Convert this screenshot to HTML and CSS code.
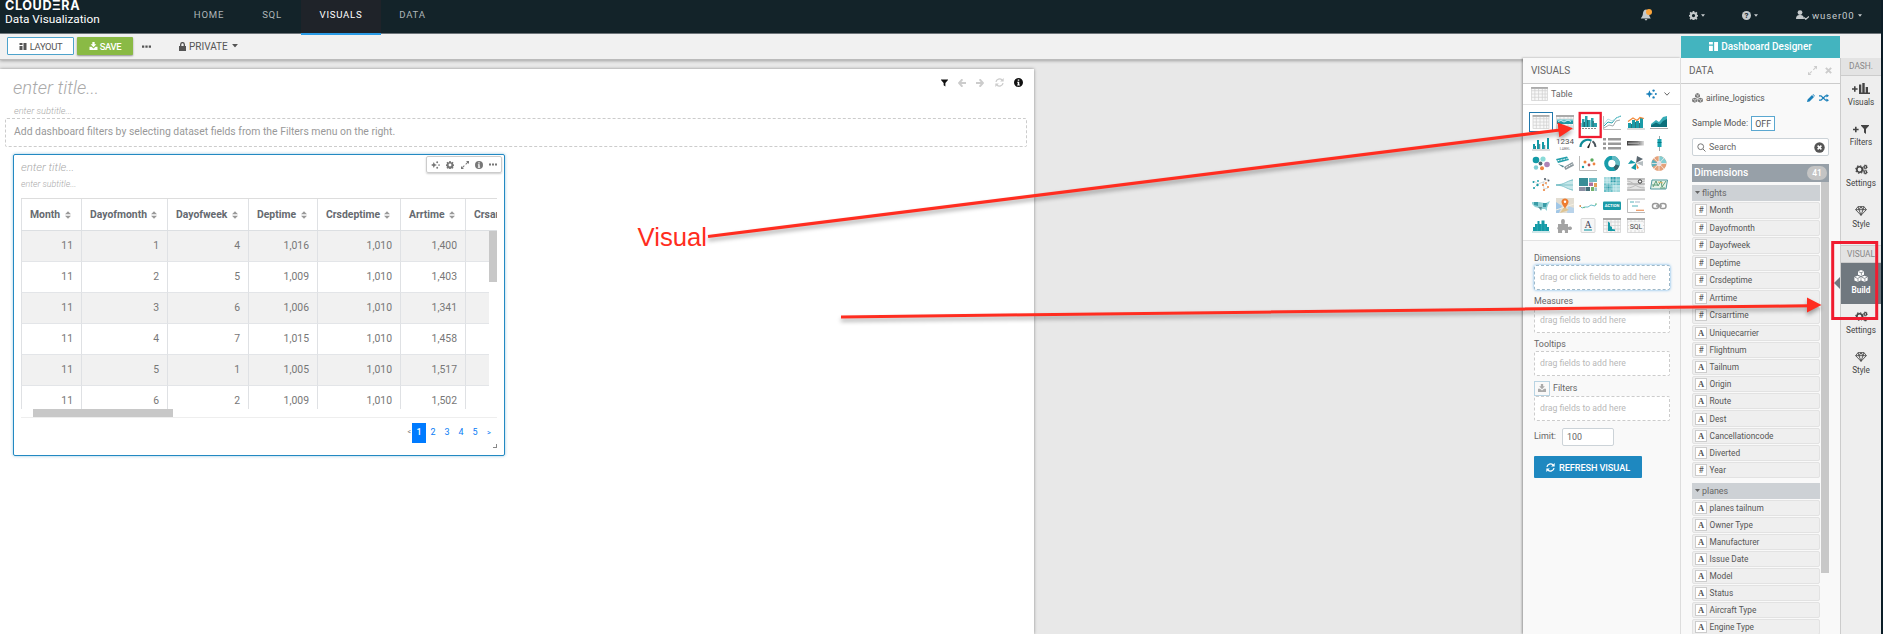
FILE: index.html
```html
<!DOCTYPE html>
<html lang="en">
<head>
<meta charset="utf-8">
<title>Cloudera Data Visualization</title>
<link rel="stylesheet" href="styles.css">
</head>
<body>
<svg class="defs" width="0" height="0">
  <symbol id="gear" viewBox="0 0 16 16"><path fill-rule="evenodd" d="M6.600 0h2.800l.4 2.200 1.500.6L13.100 1.500l1.900 1.900-1.200 1.900.6 1.400 2.200.5v2.600l-2.200.5-.6 1.400 1.200 1.900-1.900 1.900-1.900-1.200-1.400.6-.5 2.100H6.600l-.5-2.100-1.400-.6-1.900 1.200L1 13.600l1.200-1.900-.6-1.400L0 9.800V7.200l1.600-.5.6-1.400L1 3.400l1.900-1.900 1.800 1.300 1.500-.6zM8 5.200a2.900 2.900 0 1 0 0 5.800 2.900 2.900 0 0 0 0-5.800z"/></symbol>
  <symbol id="gears" viewBox="0 0 20 16"><circle cx="7" cy="8" r="4.200" fill="none" stroke="currentColor" stroke-width="2.600"/><circle cx="7" cy="8" r="5.900" fill="none" stroke="currentColor" stroke-width="1.600" stroke-dasharray="2.300 2.300"/><circle cx="16" cy="4" r="2" fill="none" stroke="currentColor" stroke-width="1.700"/><circle cx="16" cy="12" r="2" fill="none" stroke="currentColor" stroke-width="1.700"/><circle cx="16" cy="4" r="3.200" fill="none" stroke="currentColor" stroke-dasharray="1.500 1.500"/><circle cx="16" cy="12" r="3.200" fill="none" stroke="currentColor" stroke-dasharray="1.500 1.500"/></symbol>
  <symbol id="caret" viewBox="0 0 10 6"><path d="M0 0h10L5 6z"/></symbol>
  <symbol id="sort" viewBox="0 0 8 10"><path d="M0 4h8L4 0zM0 6h8l-4 4z"/></symbol>
  <symbol id="funnel" viewBox="0 0 12 12"><path d="M0 0h12v1L7.500 6v6l-3-2.200V6L0 1z"/></symbol>
  <symbol id="arrow" viewBox="0 0 12 12"><path d="M7 0 5 0-.2 6 5 12h2V9.500L4.800 7.400H12V4.600H4.800L7 2.500z"/></symbol>
  <symbol id="refresh" viewBox="0 0 14 14"><path d="M1.500 6A5.600 5.600 0 0 1 11 3M12.500 8A5.600 5.600 0 0 1 3 11" fill="none" stroke="currentColor" stroke-width="2"/><path d="M13.500 0v5.500H8zM.5 14V8.500H6z"/></symbol>
  <symbol id="info" viewBox="0 0 12 12"><path fill-rule="evenodd" d="M6 0a6 6 0 1 1 0 12A6 6 0 0 1 6 0zM5 2v1.800h2V2zM4.300 5v1.200H5v2.600h-.7V10h3.400V8.800H7V5z"/></symbol>
  <symbol id="expand" viewBox="0 0 12 12"><path d="M7.500 0H12v4.500zM0 7.500V12h4.500zM9.500 1.500l1 1-3 3-1-1zM4.500 6.500l1 1-3 3-1-1z"/></symbol>
  <symbol id="dots" viewBox="0 0 12 4"><path d="M0 .5h3v3H0zM4.500.5h3v3h-3zM9 .5h3v3H9z"/></symbol>
  <symbol id="spark" viewBox="0 0 16 14"><path d="M5 1.500 6.600 5.400 10.500 7 6.600 8.600 5 12.500 3.400 8.600-.5 7l3.900-1.600z"/><circle cx="11" cy="2" r="1.700"/><circle cx="14.300" cy="7" r="1.500"/><circle cx="11" cy="12" r="1.700"/></symbol>
  <symbol id="download" viewBox="0 0 14 14"><path d="M5 0h4v4h3L7 9 2 4h3zM0 8.500h3.500L7 11.500l3.500-3H14V14H0z"/></symbol>
  <symbol id="layout" viewBox="0 0 14 14"><path d="M0 0h6v4H0zM0 6h6v8H0zM8 0h6v14H8z"/></symbol>
  <symbol id="cubes" viewBox="0 0 18 16"><path d="M9 0l4 1.700v4.600L9 8 5 6.300V1.700zM4.400 7.500l4.200 1.700v4.700l-4.200 1.900L.2 13.900V9.200zM13.600 7.500l4.200 1.700v4.700l-4.200 1.900-4.200-1.900V9.200z"/><path d="M5.500 2.200 9 3.700l3.500-1.500M9.500 7V4M.9 9.700l3.500 1.500 3.500-1.500M5 15v-3.500M10.100 9.700l3.500 1.500 3.500-1.500M14.200 15v-3.500" class="cube-lines"/></symbol>
  <symbol id="gem" viewBox="0 0 18 15"><path d="M4.500 1h9L17 5.500 9 14 1 5.500zM1 5.500h16M6 5.500 9 14l3-8.500L9 1 6 5.500 4.500 1M12 5.500 13.500 1" fill="none" stroke="currentColor" stroke-width="1.300"/></symbol>
</svg>

<div class="app">
  <header class="nav">
    <div class="brand"><b>CLOUDΞRA</b><span>Data Visualization</span></div>
    <nav class="tabs"><a class="t1">HOME</a><a class="t2">SQL</a><a class="t3 active">VISUALS</a><a class="t4">DATA</a></nav>
    <div class="tools">
      <svg class="bell" viewBox="0 0 12 12"><path d="M6 .5C3.500.8 3 3 2.800 5.500 2.500 7.500 1.500 8 .8 9.500h10C10 8 9.400 7.500 9.200 5.500 9 3 8.500.8 6 .5zM4.500 10h3L6 11.800z" fill="#c5cacc"/><circle cx="9" cy="3" r="3" fill="#fca53c"/></svg>
      <div class="tool tg"><svg width="9" height="9"><use href="#gear"/></svg><svg width="4" height="3"><use href="#caret"/></svg></div>
      <div class="tool th"><span class="help">?</span><svg width="4" height="3"><use href="#caret"/></svg></div>
      <div class="tool tu"><svg width="13" height="10" viewBox="0 0 13 10"><circle cx="4" cy="2.600" r="2.400"/><path d="M0 9C0 6 1.500 4.800 4 5c2.500-.2 4 1 4 4z"/><path d="M8 7.500 9.800 9.200 13 6.500" fill="none" stroke="currentColor" stroke-width="1.300"/></svg><span>wuser00</span><svg width="4" height="3"><use href="#caret"/></svg></div>
    </div>
  </header>

  <div class="bar">
    <div class="btn layout-btn"><svg width="8" height="7"><use href="#layout"/></svg>LAYOUT</div>
    <div class="btn save-btn"><svg width="9" height="8"><use href="#download"/></svg>SAVE</div>
    <svg class="more" width="9" height="3"><use href="#dots"/></svg>
    <svg class="lock" width="7" height="9" viewBox="0 0 7 9"><path d="M0 4h7v5H0z"/><path d="M1.700 4V2.500a1.800 1.800 0 0 1 3.600 0V4" fill="none" stroke="#444" stroke-width="1.200"/></svg>
    <span>PRIVATE</span><svg class="pc" width="6" height="3.500"><use href="#caret"/></svg>
  </div>

  <div class="work">
    <main class="canvas">
      <div class="dash-head">
        <div><h1>enter title...</h1><h2>enter subtitle...</h2></div>
        <div class="dash-icons">
          <svg width="7" height="8"><use href="#funnel"/></svg>
          <svg class="dim" width="8" height="8"><use href="#arrow"/></svg>
          <svg class="dim flip" width="8" height="8"><use href="#arrow"/></svg>
          <svg class="dim" width="9" height="9"><use href="#refresh"/></svg>
          <svg width="9" height="9"><use href="#info"/></svg>
        </div>
      </div>
      <div class="filter-box">Add dashboard filters by selecting dataset fields from the Filters menu on the right.</div>
      <section class="widget">
        <div class="w-head">
          <div><h3>enter title...</h3><h4>enter subtitle...</h4></div>
          <div class="w-tools"><svg width="9" height="8"><use href="#spark"/></svg><svg width="8" height="8"><use href="#gear"/></svg><svg width="8" height="8"><use href="#expand"/></svg><svg width="8" height="8"><use href="#info"/></svg><svg width="8" height="3"><use href="#dots"/></svg></div>
        </div>
        <div class="grid-wrap">
          <div class="row head"><span>Month<svg><use href="#sort"/></svg></span><span>Dayofmonth<svg><use href="#sort"/></svg></span><span>Dayofweek<svg><use href="#sort"/></svg></span><span>Deptime<svg><use href="#sort"/></svg></span><span>Crsdeptime<svg><use href="#sort"/></svg></span><span>Arrtime<svg><use href="#sort"/></svg></span><span>Crsarrtime</span></div>
          <div class="rows">
            <div class="row-list">
              <div class="row"><span>11</span><span>1</span><span>4</span><span>1,016</span><span>1,010</span><span>1,400</span><span></span></div>
              <div class="row"><span>11</span><span>2</span><span>5</span><span>1,009</span><span>1,010</span><span>1,403</span><span></span></div>
              <div class="row"><span>11</span><span>3</span><span>6</span><span>1,006</span><span>1,010</span><span>1,341</span><span></span></div>
              <div class="row"><span>11</span><span>4</span><span>7</span><span>1,015</span><span>1,010</span><span>1,458</span><span></span></div>
              <div class="row"><span>11</span><span>5</span><span>1</span><span>1,005</span><span>1,010</span><span>1,517</span><span></span></div>
              <div class="row"><span>11</span><span>6</span><span>2</span><span>1,009</span><span>1,010</span><span>1,502</span><span></span></div>
            </div>
            <div class="v-thumb"></div>
          </div>
          <div class="h-track"><div class="h-thumb"></div></div>
        </div>
        <div class="pages"><i>&lt;</i><b>1</b><a>2</a><a>3</a><a>4</a><a>5</a><a class="nx">&gt;</a></div>
        <div class="grip"></div>
      </section>
    </main>

    <aside class="visuals">
      <div class="p-head">VISUALS</div>
      <div class="cur"><svg width="17" height="14" viewBox="0 0 18 15"><use href="#tbl"/></svg><span>Table</span><svg class="sp" width="11" height="10"><use href="#spark"/></svg><svg class="chev" width="6" height="4" viewBox="0 0 6 4"><path d="M.5.5 3 3.200 5.500.5" fill="none" stroke="#666"/></svg></div>
      <div class="icons">
        <svg class="sel" viewBox="0 0 18 15"><g id="tbl"><path d="M0 0h18v15H0z" fill="#f8f8f8"/><path d="M.5.5h17v14H.5zM.5 4h17M.5 7.500h17M.5 11h17M4 2v12.500M8 2v12.500M12 2v12.500M15 2v12.500" fill="none" stroke="#d2d2d2" stroke-width=".8"/><path d="M0 0h18v2H0z" fill="#aaa"/></g></svg>
        <svg viewBox="0 0 18 15"><use href="#tbl"/><path d="M1 4.500h16V9H1z" fill="#5fc0ca"/><path d="M1 6h16v3H1z" fill="#2097a4"/><path d="M2 6.500 5 5.500l3 1.500 4-2 3 1.500" stroke="#d8f1f3" fill="none"/><path d="M1 11h16v2H1z" fill="#c9ebee"/></svg>
        <svg viewBox="0 0 18 15"><path d="M0 8h2.500v4H0zM3 4h2.500v8H3zM6 1h2.500v11H6zM9 5h2.500v7H9zM12 3h2.500v9H12zM15 8h3v4h-3z" fill="#2aa2ae"/><path d="M4.500 7H6v5H4.500zM8 5h1.200v7H8zM13.500 6h1.300v6h-1.300z" fill="#1d6d76"/><path d="M2 8h1v4H2zM11 7h1v5h-1z" fill="#8cc8ce"/><path d="M0 13.500h18" stroke="#888" stroke-dasharray="2 1"/></svg>
        <svg viewBox="0 0 18 15"><path d="M1 11 5 7l4 1 4-5 5-2" fill="none" stroke="#2aa4b1"/><path d="M1 13 6 10l4 1 3-5 4-1" fill="none" stroke="#8a9397" stroke-width=".8"/><path d="M1 9 5 4l4 2 8-5" fill="none" stroke="#9bd7dd" stroke-width=".8"/><path d="M.5 1v13.500H18" fill="none" stroke="#bbb"/></svg>
        <svg viewBox="0 0 18 15"><path d="M1 8h3v5H1zM5 5h3v8H5zM9 6h3v7H9zM13 3h3v10h-3z" fill="#1b9ba7"/><path d="M4 9h1v4H4zM8 7h1v6H8zM12 8h1v5h-1z" fill="#2c747d"/><path d="M1 6.500 6 3l4 2.500 3-3 4 1" fill="none" stroke="#f28a3b" stroke-width="1.200"/><path d="M0 14h18" stroke="#bbb"/></svg>
        <svg viewBox="0 0 18 15"><path d="M1 12V9l5-4 3 2 4-5 4-1v11z" fill="#38acb6"/><path d="M1 12v-1.500l5-3 4 2 3-3.500 4-2v8z" fill="#0c6f7a"/><path d="M0 13.500h18" stroke="#aaa"/></svg>

        <svg viewBox="0 0 18 15"><path d="M1 8h2v5H1zM5 4h2v9H5zM10 6h2v7h-2zM15 2h2v11h-2z" fill="#139aa6"/><path d="M3 10h1v3H3zM7.200 8h1v5h-1zM12.200 9h1v4h-1z" fill="#3b7b85"/><path d="M0 14h18" stroke="#bbb"/></svg>
        <svg viewBox="0 0 18 15"><text x="9" y="7.500" class="num">1234</text><text x="9" y="13.500" class="lab">LABEL</text></svg>
        <svg viewBox="0 0 18 15"><path d="M1.500 11a7.500 7.500 0 0 1 11-6.300" fill="none" stroke="#0f8c98" stroke-width="2.200"/><path d="M13.500 5.300a7.500 7.500 0 0 1 3 5.700" fill="none" stroke="#49545c" stroke-width="1.800"/><path d="M12 5 8 11.500l2 .8z" fill="#222"/></svg>
        <svg viewBox="0 0 18 15"><path d="M0 2h3v2.500H0zM5 2h13v2.500H5zM0 6.500h3V9H0zM5 6.500h13V9H5zM0 11h3v2.500H0zM5 11h13v2.500H5z" fill="#999"/></svg>
        <svg viewBox="0 0 18 15"><defs><linearGradient id="bu"><stop offset="0" stop-color="#444"/><stop offset=".6" stop-color="#777"/><stop offset="1" stop-color="#ddd"/></linearGradient></defs><path d="M0 5h17v4.500H0z" fill="url(#bu)"/><path d="M1 7.200h11" stroke="#bbb"/></svg>
        <svg viewBox="0 0 18 15"><path d="M9.500 0v15" stroke="#9ba6aa"/><path d="M7.500 3h4v8h-4z" fill="#18a3b0"/><path d="M7.500 6.500h4" stroke="#087783"/></svg>

        <svg viewBox="0 0 18 15"><circle cx="4" cy="4" r="3.300" fill="#139aa6"/><circle cx="11" cy="3" r="2.600" fill="#8adbd8"/><circle cx="15" cy="8.500" r="2.800" fill="#ad83b6"/><circle cx="8.500" cy="7.500" r="1.900" fill="#53646d"/><circle cx="4" cy="11.500" r="2.200" fill="#7fcdd4"/><circle cx="10" cy="12.200" r="2" fill="#ee8341"/></svg>
        <svg viewBox="0 0 18 15"><path d="m0 3 11-2.500L13 4 2 7z" fill="#239fab"/><path d="M1.500 4.800 11.500 2.500" stroke="#fff" stroke-dasharray="2 1"/><path d="m8 11 8.500-5 1.500 3.500L9.500 14z" fill="#8b989e"/><path d="M10 11.500 16.500 8" stroke="#fff" stroke-dasharray="2 1"/><path d="m2 8 6 2-1 1.500z" fill="#43808c"/></svg>
        <svg viewBox="0 0 18 15"><path d="M.5 0v14.500H18" fill="none" stroke="#bbb"/><circle cx="4" cy="11" r="1.200" fill="#139aa6"/><circle cx="6" cy="6" r="1.500" fill="#ed853d"/><circle cx="10" cy="9" r="1.400" fill="#b94e54"/><circle cx="13" cy="4" r="1.700" fill="#5aaa5e"/><circle cx="15" cy="8" r="1.400" fill="#ee8341"/></svg>
        <svg viewBox="0 0 18 15"><circle cx="9" cy="7.500" r="5.800" fill="none" stroke="#179caa" stroke-width="4"/><path d="M9 1.700a5.800 5.800 0 0 1 5.500 7.500" fill="none" stroke="#62b9c2" stroke-width="4"/><path d="M14.500 9.200a5.800 5.800 0 0 1-3 3.500" fill="none" stroke="#36626b" stroke-width="4"/></svg>
        <svg viewBox="0 0 18 15"><path d="M9 7 10 0l6 3z" fill="#5b6871"/><path d="M9 7 1 8l3-4zM9 7v7L4 12z" fill="#139aa6"/><path d="m9 7 7-2v5z" fill="#b5bdc0"/><path d="m9 7 3 5-2 1z" fill="#ed853d"/></svg>
        <svg viewBox="0 0 18 15"><circle cx="9" cy="7.500" r="5" fill="none" stroke="#e5a17a" stroke-width="5"/><path d="M9 2.500a5 5 0 0 1 5 5" stroke="#82ced3" fill="none" stroke-width="5"/><path d="M4.500 10a5 5 0 0 1 .5-5" stroke="#5eb0bd" fill="none" stroke-width="5"/><path d="m9 0 0 15M1.500 7.500h15M4 2l10 11M14 2 4 13" stroke="#f5eee8" stroke-width=".8"/><circle cx="9" cy="7.500" r="2.300" fill="#e6dfe6"/></svg>

        <svg viewBox="0 0 18 15"><path d="M2 4 6 7l-4 4M6 7l5-2 5-3M11 5l4 3M11 5l1 7 4-1" stroke="#c5cdd0" fill="none" stroke-width=".7"/><g fill="#159aa6"><circle cx="1.500" cy="5" r="1"/><circle cx="5.500" cy="8" r="1.200"/><circle cx="2" cy="11" r="1"/><circle cx="6" cy="4" r=".9"/></g><g fill="#56606a"><circle cx="13" cy="2" r="1.100"/><circle cx="16.500" cy="3.500" r="1"/></g><g fill="#ed853d"><circle cx="11" cy="8" r="1.100"/><circle cx="12" cy="13" r="1.100"/><circle cx="16" cy="10" r="1"/><circle cx="14" cy="6" r=".9"/></g></svg>
        <svg viewBox="0 0 18 15"><path d="M0 8c8-.5 10-3 17-6v12c-7-3-9-5.500-17-6z" fill="#c5e6e9"/><path d="M0 8c9-.5 10-4 17-5M0 8h17M0 8c9 .5 10 4 17 5" fill="none" stroke="#62b4bd" stroke-width=".7"/></svg>
        <svg viewBox="0 0 18 15"><path d="M0 1h9v8H0z" fill="#398d96"/><path d="M0 10h6v4H0z" fill="#8d8fa3"/><path d="M6.500 10H11v4H6.500z" fill="#46707a"/><path d="M10 1h8v4h-8z" fill="#74bcc4"/><path d="M10 5.500h4V9h-4z" fill="#ad72a0"/><path d="M15 6h3v4h-3z" fill="#e3a05a"/><path d="M12 10h3v4h-3z" fill="#73b36d"/><path d="M15.500 10.500H18V14h-2.500z" fill="#9cc6cb"/></svg>
        <svg viewBox="0 0 18 15"><path d="M1 0h16v15H1z" fill="#6cc0c8"/><path d="M1 0h6v6H1zM10 8h7v7h-7z" fill="#a5dade"/><path d="M8 0h5v5H8zM3 8h5v5H3z" fill="#2f9daa"/><path d="M4 0v15M7 0v15M10 0v15M13 0v15M1 3h16M1 6h16M1 9h16M1 12h16" stroke="#e1f4f5" stroke-width=".6"/></svg>
        <svg viewBox="0 0 18 15"><path d="M.5 1h17v13H.5z" fill="#e3e3e3"/><path d="M0 2h18M0 7h18M0 13h18" stroke="#999"/><path d="M0 4c6 0 8 7 18 7M0 11c8 0 10-6 18-7" fill="none" stroke="#bbb"/><circle cx="13" cy="4.500" r="1.700" fill="#fff" stroke="#333"/></svg>
        <svg viewBox="0 0 18 15"><path d="M2 3h15.500l-1.500 9H.5z" fill="#e7f2e8" stroke="#4f989e"/><path d="m3 10 3-6 2 5 3-5 1 6 4-6M2 8h5m3 3h5" fill="none" stroke="#5c9e79"/><path d="m8 5 5 1" stroke="#d8b46d"/></svg>

        <svg viewBox="0 0 18 15"><path d="m0 4 7 0 5 1 2 0 4-2-2 4-1 3 0 3-2-2-3 0-1 2-2-3-4-1-3-3z" fill="#8fd1d6"/><path d="m2 4 4 0v4L2 7zM11 5l4 0-1 4-3 0z" fill="#3a9ca7"/><path d="m6 9 4 0-1 3z" fill="#5c8d96"/></svg>
        <svg viewBox="0 0 18 15"><path d="M0 0h18v15H0z" fill="#e2ddd2"/><path d="m0 4 6 4-3 7H0z" fill="#a1c7e7"/><path d="m12 8 6 2v5h-7z" fill="#b9d3ea"/><path d="M4 15 8 9l5 3" fill="#dfc491"/><path d="M0 12 18 6" stroke="#f4efe2"/><path d="M9 10.500C6.500 7 5.300 5 5.500 3.500 6-.5 12-.5 12.500 3.500 12.700 5 11.500 7 9 10.500z" fill="#ef7d31"/><circle cx="9" cy="3.800" r="1.200" fill="#fff"/></svg>
        <svg viewBox="0 0 18 15"><path d="m1 8 2 2 3-1 3 0 3-2 4 1 1-2" fill="none" stroke="#69bfc7" stroke-width="1"/><circle cx="5" cy="9.500" r=".8" fill="#6bb877"/><circle cx="1.200" cy="8" r=".9" fill="#e08c4c"/><circle cx="17" cy="6" r=".8" fill="#6bb877"/></svg>
        <svg viewBox="0 0 18 15"><rect y="3.500" width="18" height="8.500" rx="1" fill="#1b9aa7"/><text x="9" y="9.300" class="act">ACTION</text></svg>
        <svg viewBox="0 0 18 15"><path d="M.5 1v13.500H18M.5 1H18" fill="none" stroke="#bbb"/><path d="M3 4h4M5 8h6" stroke="#53b2bb"/><path d="M8 4h5" stroke="#a5b7c8"/><path d="M9 12.300h8" stroke="#ec9b6a" stroke-width="1.300"/></svg>
        <svg viewBox="0 0 18 15"><rect x="2.500" y="5.500" width="6" height="5" rx="2.300" fill="none" stroke="#999" stroke-width="1.500"/><rect x="10" y="5.500" width="6" height="5" rx="2.300" fill="none" stroke="#999" stroke-width="1.500"/><path d="M6 8h6" stroke="#999" stroke-width="1.400"/></svg>

        <svg viewBox="0 0 18 15"><path d="M1 13V9h2V6h2.500V3h2v3h2V2.500h3V6H15v3h2v4z" fill="#139aa6"/><path d="M5.300 6v7M9.500 6v7M13 6v7" stroke="#49b2bc" stroke-width=".5"/><path d="M0 14h18" stroke="#9ccfd4"/></svg>
        <svg viewBox="0 0 18 15"><path d="M2 6h3.500C5 4.500 4.500 1 7 1s2 3.500 1.500 5H12v3c1.500-.8 4-.8 4 1.300s-2.500 2-4 1.200V15H8.800c.4-1.500.4-3-1.300-3s-1.700 1.500-1.300 3H2v-3.500c-1-.5-1-2 0-2.500z" fill="#a3a3a3"/></svg>
        <svg viewBox="0 0 18 15"><rect x="2" y=".5" width="14" height="14" rx="1" fill="#f6f6f6" stroke="#ccc" stroke-width=".7"/><text x="9" y="9.500" class="aa">A</text><path d="M5 12h8" stroke="#2ba2ae" stroke-width="1.200"/></svg>
        <svg viewBox="0 0 18 15"><use href="#tbl"/><path d="M5 3.500 7 5v3l2 1v2l3 .5v1.500H5z" fill="#139aa6"/></svg>
        <svg viewBox="0 0 18 15"><use href="#tbl"/><path d="M2 4h14v8H2z" fill="#f8f8f8"/><text x="9" y="10.800" class="sql">SQL</text></svg>
      </div>
      <div class="build">
        <label>Dimensions</label><div class="drop focus">drag or click fields to add here</div>
        <label>Measures</label><div class="drop">drag fields to add here</div>
        <label>Tooltips</label><div class="drop last">drag fields to add here</div>
        <label class="fl"><span class="dl"><svg width="8" height="8"><use href="#download"/></svg></span>Filters</label><div class="drop">drag fields to add here</div>
        <div class="limit">Limit:<span>100</span></div>
        <div class="go"><svg width="9" height="9"><use href="#refresh"/></svg>REFRESH VISUAL</div>
      </div>
    </aside>

    <aside class="data">
      <div class="designer"><svg width="9" height="9"><use href="#layout"/></svg>Dashboard Designer</div>
      <div class="p-head">DATA<span class="ctl"><svg width="9" height="9"><use href="#expand"/></svg><svg width="7" height="7" viewBox="0 0 8 8"><path d="m1 1 6 6M7 1 1 7" stroke="#ccc" stroke-width="2.300"/></svg></span></div>
      <div class="ds"><svg width="11" height="10"><use href="#cubes"/></svg><span>airline_logistics</span><svg class="pen" width="8" height="8" viewBox="0 0 8 8"><path d="M0 8 .6 5.500 5 1l2 2-4.500 4.500zM5.600.5 6.100 0 8 1.900l-.5.5z"/></svg><svg width="10" height="8" viewBox="0 0 10 8"><path d="M0 1.800h2L6.500 6.200H8M0 6.200h2L6.500 1.800H8" fill="none" stroke="currentColor" stroke-width="1.300"/><path d="M7.500 0 10 1.800 7.500 3.600zM7.500 4.400 10 6.200 7.500 8z"/></svg></div>
      <div class="sm">Sample Mode:<span>OFF</span></div>
      <div class="search"><svg width="9" height="9" viewBox="0 0 9 9"><circle cx="3.700" cy="3.700" r="2.900" fill="none" stroke="#777"/><path d="m6 6 2.500 2.500" stroke="#777"/></svg><span>Search</span><svg width="11" height="11" viewBox="0 0 11 11"><circle cx="5.500" cy="5.500" r="5.200" fill="#555"/><path d="m3.600 3.600 3.800 3.800M7.400 3.600 3.600 7.400" stroke="#fff" stroke-width="1.500"/></svg></div>
      <div class="dim-head">Dimensions<span>41</span></div>
      <div class="fields">
        <div class="list">
          <div class="grp"><svg width="5" height="3"><use href="#caret"/></svg>flights</div>
          <div class="f n"><i>#</i>Month</div>
          <div class="f n"><i>#</i>Dayofmonth</div>
          <div class="f n"><i>#</i>Dayofweek</div>
          <div class="f n"><i>#</i>Deptime</div>
          <div class="f n"><i>#</i>Crsdeptime</div>
          <div class="f n"><i>#</i>Arrtime</div>
          <div class="f n"><i>#</i>Crsarrtime</div>
          <div class="f"><i>A</i>Uniquecarrier</div>
          <div class="f n"><i>#</i>Flightnum</div>
          <div class="f"><i>A</i>Tailnum</div>
          <div class="f"><i>A</i>Origin</div>
          <div class="f"><i>A</i>Route</div>
          <div class="f"><i>A</i>Dest</div>
          <div class="f"><i>A</i>Cancellationcode</div>
          <div class="f"><i>A</i>Diverted</div>
          <div class="f n"><i>#</i>Year</div>
          <div class="grp g2"><svg width="5" height="3"><use href="#caret"/></svg>planes</div>
          <div class="f"><i>A</i>planes tailnum</div>
          <div class="f"><i>A</i>Owner Type</div>
          <div class="f"><i>A</i>Manufacturer</div>
          <div class="f"><i>A</i>Issue Date</div>
          <div class="f"><i>A</i>Model</div>
          <div class="f"><i>A</i>Status</div>
          <div class="f"><i>A</i>Aircraft Type</div>
          <div class="f"><i>A</i>Engine Type</div>
        </div>
        <div class="f-thumb"></div>
      </div>
    </aside>

    <aside class="rail">
      <div class="r-label">DASH.</div>
      <div class="r-item"><svg width="18" height="11" viewBox="0 0 18 11"><path d="M0 5.200h2v-2h1.600v2h2v1.600h-2v2H2v-2H0zM7 1.500h2.300v8H7zM10.300 0h2.400v9.500h-2.400zM13.700 4H16v5.500h-2.300zM7 9.500h11V11H7z"/></svg>Visuals</div>
      <div class="r-item"><svg width="16" height="10" viewBox="0 0 16 10"><path d="M0 4.700h2v-2h1.600v2h2v1.600h-2v2H2v-2H0zM8 1h8v.7L13 5v5l-2-1.500V5L8 1.700z"/></svg>Filters</div>
      <div class="r-item"><svg width="13" height="11"><use href="#gears"/></svg>Settings</div>
      <div class="r-item"><svg width="12" height="10"><use href="#gem"/></svg>Style</div>
      <div class="r-label second">VISUAL</div>
      <div class="r-item on"><svg width="14" height="12"><use href="#cubes"/></svg>Build</div>
      <div class="r-item"><svg width="13" height="11"><use href="#gears"/></svg>Settings</div>
      <div class="r-item"><svg width="12" height="10"><use href="#gem"/></svg>Style</div>
    </aside>
  </div>
</div>

<svg class="marks" width="1883" height="634" viewBox="0 0 1883 634">
  <g class="arrows"><path d="M708 236.500 1560 130" /><path d="M841 317 1808 305.700"/><path class="tip" d="m1573 128.300-15.500-5.800 1.800 14.800zM1821.500 305l-14.500-7.500v15z"/></g>
  <rect x="1579.700" y="113" width="21" height="24" class="box1"/>
  <rect x="1832.700" y="242.500" width="44" height="76" class="box2"/>
  <text x="637.500" y="246" class="vtext">Visual</text>
</svg>
</body>
</html>
```
FILE: styles.css
```css
* { box-sizing: border-box; }
body { margin: 0; font-family: Roboto, "Liberation Sans", sans-serif; color: #666; font-size: 8.900px; overflow: hidden; }
svg { display: block; flex: none; fill: currentColor; }
.defs { position: absolute; }
h1, h2, h3, h4 { margin: 0; font-weight: 300; font-style: italic; color: #aaa; white-space: nowrap; }
.app { width: 1883px; height: 634px; display: flex; flex-direction: column; background: #e8e8e8; border-right: 2px solid #0b1d27; }

.nav { height: 34px; flex: none; display: flex; background: #132329; border-bottom: 1px solid #737b80; }
.brand { width: 172px; padding: 1px 0 0 5px; color: #fff; display: flex; flex-direction: column; }
.brand b { font: 700 12.600px/10px Inter, sans-serif; letter-spacing: .6px; }
.brand span { font-size: 11.800px; line-height: 16px; }
.tabs { display: flex; width: 300px; font-size: 9.600px; letter-spacing: .75px; color: #aeb5b8; line-height: 30px; }
.tabs a { height: 35px; text-align: center; flex: none; }
.t1 { width: 74px; }
.t2 { width: 55px; padding-right: 3px; }
.t3 { width: 80px; }
.t4 { width: 65px; padding-right: 2px; }
.tabs .active { background: #1f2329; color: #fff; border-bottom: 2px solid #2a9be6; z-index: 2; position: relative; }
.tools { margin-left: auto; width: 245px; display: flex; align-items: center; height: 30px; color: #c5cacc; }
.bell { width: 12px; height: 12px; margin-left: 4px; }
.tool { display: flex; align-items: center; gap: 3px; }
.tg { margin-left: 37px; }
.th { margin-left: 37px; }
.tu { margin-left: 38px; font-size: 9.600px; letter-spacing: .85px; }
.help { width: 9px; height: 9px; border-radius: 50%; background: #c5cacc; color: #132329; font: 700 8px/9px Roboto, sans-serif; text-align: center; }

.bar { height: 26px; flex: none; display: flex; align-items: center; padding: 0 0 1px 7px; background: #f1f1f1; border-bottom: 1px solid #bbb; box-shadow: 0 1px 3px rgba(0,0,0,.3); color: #555; font-size: 10px; z-index: 1; }
.btn { height: 18px; display: flex; align-items: center; justify-content: center; gap: 3px; border-radius: 1px; font-size: 9.400px; letter-spacing: -.35px; }
.layout-btn { width: 67px; background: #fff; border: 1px solid #4da3cc; }
.save-btn { width: 56px; margin-left: 3px; background: #8aba45; color: #fff; font-weight: 500; gap: 2px; box-shadow: 0 1px 2px rgba(0,0,0,.4); }
.more { margin-left: 9px; }
.lock { margin: 0 3px 0 28px; }
.pc { margin-left: 4px; }

.work { flex: 1; display: flex; min-height: 0; }
.canvas { width: 1034px; height: 565px; margin-top: 9px; background: #fff; box-shadow: 0 0 3px rgba(0,0,0,.4); padding-left: 5px; flex: none; }
.dash-head { height: 49px; display: flex; justify-content: space-between; padding: 7px 11px 0 8px; }
.dash-head h1 { font-size: 18.400px; line-height: 23px; }
.dash-head h2 { font-size: 9.300px; line-height: 12px; margin-top: 6px; margin-left: 1px; }
.dash-icons { display: flex; gap: 10px; height: 13px; align-items: center; color: #111; }
.dash-icons :nth-child(n+4) { margin-left: .5px; }
.dim { color: #ccc; }
.flip { transform: scaleX(-1); }
.filter-box { width: 1022px; height: 29px; border: 1px dashed #ccc; border-radius: 2px; padding-left: 8px; font-size: 10.400px; line-height: 25px; color: #999; }
.widget { width: 492px; height: 302px; margin: 7px 0 0 8px; border: 1px solid #2389c2; border-radius: 2px; box-shadow: 0 0 3px rgba(35,137,194,.5); padding: 1px 7px; }
.w-head { height: 42px; display: flex; justify-content: space-between; }
.w-head h3 { font-size: 11.400px; line-height: 14px; margin-top: 4px; }
.w-head h4 { font-size: 8.900px; line-height: 12px; margin-top: 4px; }
.w-tools { width: 76px; height: 17px; margin-right: -5px; border: 1px solid #ccc; border-radius: 2px; display: flex; align-items: center; justify-content: space-between; padding: 0 4px; color: #777; box-shadow: 0 1px 2px rgba(0,0,0,.2); }
.grid-wrap { width: 476px; border-top: 1px solid #ddd; border-bottom: 1px solid #eee; }
.row { display: grid; grid-template-columns: 60px 86px 81px 69px 83px 65px 34px; height: 31px; font-size: 10.400px; overflow: hidden; }
.row span { border-left: 1px solid #dfe1e4; border-bottom: 1px solid #e3e5e8; padding-right: 8px; text-align: right; line-height: 30px; color: #777; }
.row.head { height: 32px; border-bottom: 1px solid #dcdfe2; }
.row.head span { border-bottom: 0; font-weight: 700; display: flex; justify-content: space-between; align-items: center; padding: 0 10px 0 8px; color: #666a70; overflow: hidden; }
.row.head span:last-child { padding-right: 0; }
.row.head svg { width: 6px; height: 8px; color: #999; }
.rows { display: flex; height: 178px; overflow: hidden; }
.row-list { width: 468px; overflow: hidden; flex: none; }
.rows .row:nth-child(odd) { background: #f1f1f1; }
.v-thumb { width: 8px; height: 51px; background: #c8c8c8; }
.h-track { height: 8px; padding-left: 12px; }
.h-thumb { width: 140px; height: 8px; background: #c8c8c8; }
.pages { display: flex; justify-content: flex-end; height: 20px; margin-top: 5px; padding-right: 1px; line-height: 19px; font-size: 9px; color: #0a7bf5; }
.pages a, .pages b { width: 14px; text-align: center; }
.pages b { background: #007bff; color: #fff; font-weight: 500; }
.pages i { font-style: normal; color: #777; font-size: 7px; margin-right: 1px; }
.pages .nx { font-size: 7.500px; }
.grip { width: 4px; height: 4px; border: solid #888; border-width: 0 1px 1px 0; margin: 1px 0 0 auto; }

.visuals { width: 158px; margin-left: 489px; margin-top: -2px; background: #f9f9f9; border-right: 1px solid #ddd; flex: none; box-shadow: -1px 0 2px rgba(0,0,0,.35); z-index: 2; }
.p-head { height: 26px; border-bottom: 1px solid #ccc; padding-left: 8px; font-size: 10px; line-height: 25px; background: #f9f9f9; }
.cur { height: 21px; background: #fff; border-bottom: 1px solid #e2e2e2; display: flex; align-items: center; padding: 0 10px 0 8px; gap: 3px; }
.cur .sp { margin-left: auto; color: #1b80ba; }
.cur .chev { margin-left: 4px; }
.icons { height: 136px; background: #fff; border-bottom: 1px solid #e2e2e2; display: grid; grid-template-columns: repeat(6, 23.700px); grid-auto-rows: 20.700px; align-items: center; justify-items: center; align-content: start; padding: 7px 0 0 6px; }
.icons svg { width: 18px; height: 15px; }
.icons .sel { width: 24px; height: 20px; border: 1px solid #2078ad; padding: 2px; }
.icons text { text-anchor: middle; }
.num { font-size: 8px; fill: #555; }
.lab { font-size: 3.500px; fill: #777; }
.act { font-size: 4px; font-weight: 700; fill: #fff; }
.aa { font: 10px "Liberation Serif", serif; fill: #445; }
.sql { font-size: 7px; fill: #444; }
.build { padding: 11px 10px 0 11px; display: flex; flex-direction: column; }
.build label { height: 12px; line-height: 12px; margin-bottom: 1px; }
.drop { height: 25px; border: 1px dashed #ccc; border-radius: 2px; background: #fff; padding-left: 5px; line-height: 22px; color: #b8b8b8; margin-bottom: 5px; font-size: 8.700px; }
.focus { border-color: #9fb9c9; box-shadow: 0 0 3px #66afe9; }
.build .last { margin-bottom: 4px; }
.build .fl { height: 16px; display: flex; align-items: center; gap: 3px; margin-bottom: 0; }
.dl { width: 16px; height: 15px; border: 1px solid #b9d4e3; display: grid; place-items: center; color: #aaa; }
.limit { height: 18px; margin-top: 2px; display: flex; line-height: 17px; gap: 6px; }
.limit span { width: 52px; border: 1px solid #ccd3d8; border-radius: 2px; background: #fff; padding-left: 4px; line-height: 16px; }
.go { width: 108px; height: 22px; margin-top: 10px; background: #1e88c0; color: #fff; display: flex; align-items: center; justify-content: center; gap: 4px; font-size: 9.200px; letter-spacing: -.1px; font-weight: 500; border-radius: 1px; }

.data { width: 159px; margin-top: -24px; background: #f9f9f9; flex: none; z-index: 3; height: 598px; overflow: hidden; }
.designer { height: 22px; background: #43b4bf; color: #fff; font-size: 10px; font-weight: 500; line-height: 20px; display: flex; align-items: center; justify-content: center; gap: 3px; padding-bottom: 1px; }
.ctl { float: right; display: flex; align-items: center; gap: 8px; margin-right: 8px; height: 25px; color: #ccc; }
.ds { height: 27px; display: flex; align-items: center; padding: 0 11px; color: #1b80ba; }
.ds > :first-child { color: #777; }
.ds span { margin-left: 3px; color: #555; font-size: 8.500px; }
.pen { margin-left: auto; margin-right: 4px; }
.cube-lines { fill: none; stroke: var(--cube-line, #f9f9f9); }
.sm { height: 24px; display: flex; align-items: center; gap: 3px; padding-left: 11px; color: #555; font-size: 8.800px; }
.sm span { width: 24px; height: 15px; border: 1px solid #5aa7d0; background: #fff; line-height: 14px; text-align: center; }
.search { width: 137px; height: 18px; margin: 3px 0 0 11px; border: 1px solid #ccd3d8; border-radius: 2px; background: #fff; display: flex; align-items: center; gap: 3px; padding: 0 3px 0 4px; }
.search span { flex: 1; }
.dim-head { width: 137px; height: 18px; margin: 8px 0 0 11px; background: #97a0a8; color: #fff; font-size: 10.300px; font-weight: 500; line-height: 18px; padding-left: 2px; }
.dim-head span { float: right; width: 20px; height: 14px; border-radius: 7px; background: #c4c4c4; line-height: 14px; font-size: 8.500px; text-align: center; margin: 2px 2px 0 0; }
.fields { display: flex; margin-left: 11px; gap: 1px; }
.list { width: 128px; padding-top: 3px; flex: none; }
.grp { height: 15.700px; background: #cdd1d5; display: flex; align-items: center; gap: 2px; padding-left: 3px; margin-bottom: 1.400px; }
.g2 { margin-top: 4.600px; margin-bottom: 1px; }
.f { height: 16.100px; margin-bottom: 1px; border: 1px solid #e2e2e2; border-radius: 2px; background: #efefef; display: flex; align-items: center; font-size: 8.300px; color: #555; padding-left: 2px; }
.f.n { height: 16.500px; }
.f i { width: 12px; height: 12px; margin-right: 2.500px; border: 1px solid #ccc; background: #fff; font: 700 8.500px/11px "Liberation Serif", serif; text-align: center; }
.f.n i { font: 8.500px/11px Roboto, sans-serif; }
.f-thumb { width: 8px; height: 391px; background: #c8c8c8; }

.rail { flex: 1; margin-top: -2px; background: #eee; border-left: 1px solid #ccc; z-index: 4; }
.r-label { height: 18px; background: #e3e3e3; border-bottom: 1px solid #ccc; text-align: center; line-height: 17px; font-size: 8.400px; color: #888; }
.second { margin-top: 7px; border-top: 1px solid #ccc; }
.r-item { height: 40.600px; display: flex; flex-direction: column; align-items: center; justify-content: center; gap: 2px; padding-bottom: 1px; font-size: 8.200px; line-height: 12px; color: #444; }
.on { --cube-line: #70787f; background: #70787f; color: #fff; font-weight: 700; position: relative; }
.on::before { content: ""; position: absolute; left: -7px; top: 14px; border: 6px solid transparent; border-left: 0; border-right: 6px solid #70787f; }

.marks { position: absolute; left: 0; top: 0; z-index: 10; }
.arrows { stroke: #ff2d20; stroke-width: 3; fill: none; filter: drop-shadow(0 3px 2px rgba(0,0,0,.35)); }
.tip { fill: #ff2d20; stroke: none; }
.box1 { fill: none; stroke: #f01c30; stroke-width: 2.300; }
.box2 { fill: none; stroke: #f01c30; stroke-width: 3; }
.vtext { font: 25.700px "Liberation Sans", sans-serif; fill: #ff2d20; }
```
